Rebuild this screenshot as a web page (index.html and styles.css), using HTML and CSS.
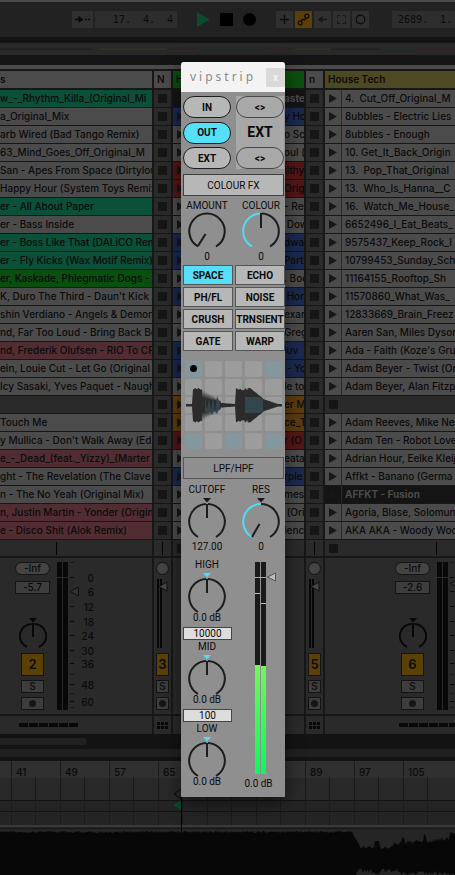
FILE: index.html
```
<!DOCTYPE html>
<html lang="en">
<head>
<meta charset="utf-8">
<meta name="viewport" content="width=device-width, initial-scale=1">
<title>vipstrip</title>
<link rel="stylesheet" href="styles.css">
</head>
<body>
<main class="app">
  <header class="toolbar">
    <button class="tool follow" aria-label="Follow"><svg width="17" height="9" viewBox="0 0 17 9"><path d="M1 4.500H7M11 4.500h2M14 4.500h2" stroke="#080808" stroke-width="1.500"/><path d="M4.500 1 9.500 4.500 4.500 8z" fill="#080808"/></svg></button>
    <div class="position"><span>17.</span><span>4.</span><span>4</span></div>
    <div class="transport">
      <button class="bare" aria-label="Play"><svg width="13" height="15" viewBox="0 0 13 15"><path d="M0 0 13 7.500 0 15z" fill="#0c4b2c"/></svg></button>
      <button class="bare" aria-label="Stop"><svg width="13" height="13"><path d="M0 0h13v13H0z"/></svg></button>
      <button class="bare" aria-label="Record"><svg width="13" height="13"><circle cx="6.500" cy="6.500" r="6.500"/></svg></button>
    </div>
    <div class="tools">
      <button class="tool" aria-label="Overdub"><svg width="11" height="11"><path d="M5.500 1v9M1 5.500h9" stroke="#080808" stroke-width="1.300"/></svg></button>
      <button class="tool lit" aria-label="Automation arm"><svg width="13" height="13" viewBox="0 0 13 13" fill="none" stroke="#0c0800" stroke-width="1.200"><circle cx="3.200" cy="9.800" r="2"/><circle cx="9.800" cy="3.200" r="2"/><path d="M4.200 8 5.500 6.200 7.500 7 8.700 5"/></svg></button>
      <button class="tool" aria-label="Re-enable automation"><svg width="11" height="9"><path d="M4 4.500h6" stroke="#161616" stroke-width="1.500"/><path d="M1 4.500 5.500 1v7z" fill="#161616"/></svg></button>
      <button class="tool" aria-label="Capture"><svg width="11" height="11" fill="none" stroke="#161616"><path d="M1.500 4V1.500H4M7 1.500h2.500V4M9.500 7v2.500H7M4 9.500H1.500V7"/></svg></button>
      <button class="tool" aria-label="Session record"><svg width="11" height="11" fill="none" stroke="#0c0c0c" stroke-width="1.200"><circle cx="5.500" cy="5.500" r="4.300"/></svg></button>
    </div>
    <div class="loop"><span>2689.</span><span>1.</span></div>
  </header>
  <div class="overview"><svg width="100%" height="2" viewBox="0 0 455 2" preserveAspectRatio="none"><path d="M0 1h93" stroke="#1c1c1c"/><path d="M101 1h66" stroke="#38381f"/><path d="M167 1h30" stroke="#30211f"/><path d="M200 1h60" stroke="#1b3520"/><path d="M260 1h35" stroke="#352020"/><path d="M295 1h36" stroke="#2a3a1c"/><path d="M331 1h50" stroke="#1c1c1c"/><path d="M385 1h32" stroke="#1c3520"/><path d="M417 1h38" stroke="#431d1d"/></svg></div>

  <section class="session">
    <div class="track" id="track-a"></div>
    <div class="track" id="track-b"></div>
    <div class="track" id="track-c"></div>
    <div class="track" id="track-d"></div>
    <div class="track" id="track-e"></div>
  </section>
  <div class="scroller"><div class="thumb"></div></div>
  <div class="splitter"></div>

  <section class="detail">
    <div class="ruler" id="ruler"></div>
    <svg class="markers" width="9" height="86" viewBox="0 0 9 86"><path d="M8 0 1 5 8 10" fill="none" stroke="#080808"/><path d="M8 11v10L0 16z" fill="#0b4b2e"/><path d="M8.500 0v86" stroke="#050505"/></svg>
    <div class="strip"></div>
    <svg class="wave" viewBox="0 0 455 46" preserveAspectRatio="none"><path id="wave" fill="#070707"/></svg>
  </section>
</main>

<aside class="panel">
  <header class="panel-title"><h1>vipstrip</h1><button class="close" aria-label="Close">x</button></header>
  <div class="routing">
    <div class="stack"><button class="pill">IN</button><button class="pill on">OUT</button><button class="pill">EXT</button></div>
    <div class="stack ext"><button class="pill">&lt;&gt;</button><strong>EXT</strong><button class="pill">&lt;&gt;</button></div>
  </div>
  <button class="wide">COLOUR FX</button>
  <div class="knobs">
    <div class="knob"><span>AMOUNT</span><svg width="38" height="38" viewBox="0 0 38 38"><path class="arc" d="M10 34.500A17.700 17.700 0 1 1 28 34.500"/><path class="needle" d="M10 34 17.500 22"/></svg><output>0</output></div>
    <div class="knob"><span>COLOUR</span><svg width="38" height="38" viewBox="0 0 38 38"><path class="arc" d="M20 1.500A17.700 17.700 0 0 1 28 34.500"/><path class="arc cyan" d="M10 34.500A17.700 17.700 0 0 1 18 1.500"/><path class="needle" d="M19 1v15"/></svg><output>0</output></div>
  </div>
  <div class="effects">
    <button class="on">SPACE</button><button>ECHO</button><button>PH/FL</button><button>NOISE</button><button>CRUSH</button><button>TRNSIENT</button><button>GATE</button><button>WARP</button>
  </div>
  <svg class="pads" viewBox="0 0 98 88"><g id="pads"></g><path id="scope" fill="#2b2b2b"/><g fill="#34464d"><path d="M20 36 22 49 24 37 26 50 28 36 30 51 32 35 35 43V46L32 53 29 49 27 54 25 50 22 53 20 50z"/><path d="M60 36h14l4 3v11l-4 2H60z"/></g><circle cx="8.500" cy="7.500" r="3.500"/></svg>
  <button class="wide hollow">LPF/HPF</button>
  <div class="knobs filter">
    <div class="knob"><span>CUTOFF</span><svg width="38" height="43" viewBox="0 0 38 43"><path d="M15 0h8l-4 4.500z" fill="#181818"/><path class="arc" d="M10 39A17.700 17.700 0 0 1 18 6M20 6A17.700 17.700 0 0 1 28 39"/><path class="needle" d="M19 6v14"/></svg><output>127.00</output></div>
    <div class="knob"><span>RES</span><svg width="38" height="43" viewBox="0 0 38 43"><path d="M15 0h8l-4 4.500z" fill="#181818"/><path class="arc" d="M19 6A17.700 17.700 0 0 1 28 39"/><path class="arc cyan" d="M10 39A17.700 17.700 0 0 1 19 6"/><path class="needle" d="M10 39 17.500 26"/></svg><output>0</output></div>
  </div>
  <div class="eq">
    <div class="bands">
      <div class="knob"><span>HIGH</span><svg width="38" height="42" viewBox="0 0 38 42"><path d="M15 0h8l-4 4.500z" fill="#51dcf5"/><path class="arc" d="M10 39A17.700 17.700 0 0 1 18 6M20 6A17.700 17.700 0 0 1 28 39"/><path class="needle" d="M19 6v14"/></svg><output>0.0 dB</output></div>
      <input aria-label="High crossover" value="10000">
      <div class="knob"><span>MID</span><svg width="38" height="42" viewBox="0 0 38 42"><path d="M15 0h8l-4 4.500z" fill="#51dcf5"/><path class="arc" d="M10 39A17.700 17.700 0 0 1 18 6M20 6A17.700 17.700 0 0 1 28 39"/><path class="needle" d="M19 6v14"/></svg><output>0.0 dB</output></div>
      <input aria-label="Low crossover" value="100">
      <div class="knob"><span>LOW</span><svg width="38" height="42" viewBox="0 0 38 42"><path d="M15 0h8l-4 4.500z" fill="#51dcf5"/><path class="arc" d="M10 39A17.700 17.700 0 0 1 18 6M20 6A17.700 17.700 0 0 1 28 39"/><path class="needle" d="M19 6v14"/></svg><output>0.0 dB</output></div>
    </div>
    <div class="level">
      <svg width="36" height="212" viewBox="0 0 36 212"><defs><linearGradient id="lv" x1="0" y1="0" x2="0" y2="1"><stop offset="0" stop-color="#78f45d"/><stop offset="1" stop-color="#0af85f"/></linearGradient></defs><path d="M12 0h5v212h-5zM18 0h5v212h-5z" fill="#1a1a1a"/><path d="M12 103h5v109h-5zM18 104h5v108h-5z" fill="url(#lv)"/><path d="M12 15.500h11" stroke="#aaa"/><path d="M12 31.500h5M18 41.500h5" stroke="#a7dc72"/><path d="M24.500 15 32.500 11v8z" fill="#bbb" stroke="#555"/></svg>
      <output>0.0 dB</output>
    </div>
  </div>
</aside>
<script src="app.js"></script>
</body>
</html>
```
FILE: styles.css
```
* { box-sizing: border-box; }
body {
  margin: 0;
  position: relative;
  background: #141414;
  color: #0b0b0b;
  font: 500 10px/17px Inter, "Liberation Sans", sans-serif;
  overflow: hidden;
}
button, input { font: inherit; color: inherit; padding: 0; margin: 0; border: 0; background: none; }
svg { display: block; flex: none; }
.app { display: flex; flex-direction: column; min-height: 100vh; }

/* Transport bar */
.toolbar {
  display: flex;
  align-items: center;
  height: 37px;
  padding-left: 72px;
  border-top: 2px solid #4a4a4a;
  background: #222;
  overflow: hidden;
}
.tool { display: flex; align-items: center; justify-content: center; width: 17px; height: 17px; background: #303030; }
.tool.lit { background: #5c3f07; }
.tool.follow { width: 21px; flex: none; }
.position, .loop { display: flex; gap: 12px; height: 17px; background: #2d2d2d; flex: none; font-family: "DejaVu Sans Mono", monospace; }
.position { width: 82px; margin-left: 2px; padding-right: 4px; justify-content: flex-end; }
.loop { flex: 1 0 0; margin-left: 23px; padding-left: 6px; overflow: hidden; }
.transport { display: flex; align-items: center; gap: 10px; margin-left: 20px; flex: none; }
.tools { display: flex; gap: 2px; margin-left: 20px; flex: none; }
.overview { display: flex; align-items: center; height: 12px; margin: 6px 0 10px; background: #292929; }

/* Session grid */
.session {
  display: grid;
  grid-template-columns: 152px 17px 131px 17px minmax(0, 1fr);
  column-gap: 2px;
  border-top: 4px solid #4a4a4a;
  padding-top: 2px;
  background: #171717;
}
.track { min-width: 0; overflow: hidden; }
.head { height: 17px; margin-bottom: 2px; padding-left: 3px; background: #4b4b4b; font-weight: 600; white-space: nowrap; overflow: hidden; }
.head.green { background: #0a500e; }
.head.yellow { background: #4d4a23; }
.head.first { padding-left: 0; }
.slot { display: flex; height: 17px; margin-bottom: 1px; background: #2a2a2a; white-space: nowrap; overflow: hidden; }
.slot.clip { background: #4b4b4b; }
.slot.teal { background: #0b5038; }
.slot.green { background: #09500e; }
.slot.pink { background: #512d33; }
.slot.blue { background: #1b294f; }
.slot.red { background: #531618; }
.slot.amber { background: #5c3b0e; }
.slot.playing { background: #141414; color: #4b4b4b; font-weight: 700; }
.launch { display: flex; align-items: center; width: 17px; height: 17px; padding-left: 4px; flex: none; }
.launch.edge { border-right: 1px solid #292929; }
.name { padding-left: 3px; }
.name.cut { padding-left: 0; }
.name.tail { margin-left: 94px; padding-left: 0; }
.status { display: flex; align-items: center; height: 16px; background: #2a2a2a; }
.tick { width: 1px; height: 13px; background: #050505; }
.tick.at-a { margin-left: 56px; }
.tick.at-b { margin-left: 8px; }
.tick.at-e { margin-left: 94px; }
.mixer { display: flex; gap: 7px; height: 156px; margin-top: 2px; padding-top: 4px; background: #2a2a2a; }
.mixer.a { padding-left: 15px; }
.mixer.e { padding-left: 70px; }
.mixer.thin { padding-left: 2px; }
.controls { display: flex; flex-direction: column; align-items: center; width: 35px; flex: none; }
.thin .controls { width: 13px; }
.readout { width: 35px; height: 13px; border: 1px solid #141414; background: #3d3d3d; line-height: 11px; text-align: center; }
.readout.peak { border-radius: 7px; margin-bottom: 6px; background: #444; }
.pan { margin: 24px 0 5px; }
.number, .solo, .arm { width: 23px; border: 1px solid #141414; background: #3d3d3d; }
.number { height: 23px; background: #5c4107; font-size: 13px; font-weight: 600; }
.solo { height: 13px; margin: 4px 0; line-height: 11px; }
.arm { display: flex; align-items: center; justify-content: center; height: 13px; }
.thin .number, .thin .solo, .thin .arm { width: 13px; }
.mini { margin: 0 0 5px; }
.scale text { font-size: 10px; text-anchor: end; fill: #0b0b0b; }
.io { display: flex; align-items: center; height: 18px; margin-top: 2px; background: #2a2a2a; }
.io.a { padding-left: 19px; }
.io.e { padding-left: 74px; }
.io.thin { padding-left: 3px; }

.scroller { height: 15px; padding-top: 4px; background: #131313; }
.thumb { width: 87px; height: 7px; border-radius: 0 4px 4px 0; background: #212121; }
.splitter { height: 12px; background: #202020; border-bottom: 4px solid #131313; }

/* Clip detail */
.detail { position: relative; display: flex; flex-direction: column; flex: 1; background: #242424; }
.ruler {
  display: flex;
  height: 64px;
  padding-left: 11px;
  overflow: hidden;
  background: linear-gradient(#303030 17px, #292929 17px, #292929 39px, #141414 39px, #141414 40px, #242424 40px, #242424 50px, #141414 50px, #141414 51px, #242424 51px);
}
.bar {
  flex: 0 0 49px;
  padding: 3px 0 0 4px;
  border-left: 1px solid #1b1b1b;
  background: linear-gradient(#1b1b1b, #1b1b1b) 23px 16px / 1px 48px no-repeat;
}
.markers { position: absolute; left: 173px; top: 28px; }
.strip { height: 4px; border-top: 2px solid #393939; border-bottom: 1px solid #171717; background: #242424; }
.wave { width: 100%; height: 46px; background: #252525; }

/* Floating channel strip */
.panel {
  position: absolute;
  left: 181px;
  top: 62px;
  width: 104px;
  padding-bottom: 7px;
  border-radius: 3px 3px 1px 1px;
  background: #8f8f8f;
  box-shadow: 0 6px 18px rgba(0, 0, 0, .5);
  font-family: Roboto, "Liberation Sans", sans-serif;
  font-weight: 400;
  line-height: 13px;
  overflow: hidden;
}
.panel-title { display: flex; align-items: center; justify-content: space-between; height: 30px; padding-left: 9px; background: #f3f3f3; }
.panel-title h1 { margin: 0; color: #8b8b8b; font: 400 12px/18px "Noto Sans", sans-serif; letter-spacing: 3px; }
.close { width: 19px; height: 19px; background: #d9d9d9; color: #f5f5f5; font-weight: 700; }
.routing { display: flex; gap: 5px; padding: 4px 2px 5px; }
.stack { display: flex; flex-direction: column; justify-content: space-between; width: 48px; height: 73px; }
.stack.ext { background: #a7a7a7; align-items: center; }
.stack strong { font-size: 14px; font-weight: 700; }
.pill { width: 48px; height: 22px; border: 1px solid #1d1d1d; border-radius: 11px; background: #b7b7b7; font-weight: 700; }
.ext .pill { border-color: #484848; background: #a9a9a9; }
.pill.on { background: #56dff8; }
.wide { display: block; width: 101px; height: 22px; margin-left: 2px; border: 1px solid #3f3f3f; background: #b7b7b7; }
.wide.hollow { background: none; border-color: #555; }
.knobs { display: flex; gap: 6px; padding: 3px 0 2px 2px; }
.knob { display: flex; flex-direction: column; align-items: center; width: 48px; }
.arc { fill: none; stroke: #1c1c1c; stroke-width: 2; }
.arc.cyan { stroke: #51dcf5; }
.needle { stroke: #1c1c1c; stroke-width: 2; fill: none; }
.effects { display: grid; grid-template-columns: 50px 50px; gap: 2px; padding: 0 0 10px 2px; }
.effects button { height: 20px; border: 1px solid #555; background: #b7b7b7; font-weight: 700; white-space: nowrap; }
.effects .on { background: #56dff8; }
.pads { width: 98px; height: 88px; margin: 0 0 8px 4px; }
.filter { padding: 4px 0 4px 2px; }
.filter svg { margin-top: 2px; }
.filter output { margin-top: -1px; }
.eq { display: flex; }
.bands { width: 51px; padding: 1px 0 0 2px; }
.bands svg { margin-top: 2px; }
.bands output { line-height: 10px; margin-top: -2px; }
.bands input { display: block; width: 49px; height: 13px; margin: 4px 0 0; border: 1px solid #444; background: #ddd; text-align: center; line-height: 11px; }
.level { display: flex; flex-direction: column; align-items: center; width: 53px; padding-top: 5px; }
.level svg { margin-left: 4px; }
.level output { margin-top: 3px; }
```
FILE: app.js
```
const tracks = {
  a: { head: ['s', 'first'], clips: [
    ['w_-_Rhythm_Killa_(Original_Mi', 'teal'], ['a_Original_Mix'], ['arb Wired (Bad Tango Remix)'],
    ['63_Mind_Goes_Off_Original_M'], ['San - Apes From Space (Dirtylou'], ['Happy Hour (System Toys Remix'],
    ['er - All About Paper', 'teal'], ['er - Bass Inside'], ['er - Boss Like That (DALiCO Rem', 'teal'],
    ['er - Fly Kicks (Wax Motif Remix)', 'teal'], ['er, Kaskade, Phlegmatic Dogs -', 'green'],
    ["K, Duro The Third - Daun't Kick M"], ['shin Verdiano - Angels & Demon'], ['nd, Far Too Loud - Bring Back Bo'],
    ['nd, Frederik Olufsen - RIO To CP', 'pink'], ['ein, Louie Cut - Let Go (Original'],
    ['Icy Sasaki, Yves Paquet - Naught'], null, ['Touch Me'], ["y Mullica - Don't Walk Away (Ed"],
    ['e_-_Dead_(feat._Yizzy)_(Marter', 'pink'], ['ght - The Revelation (The Clave R'], ['n - The No Yeah (Original Mix)'],
    ['n, Justin Martin - Yonder (Origin', 'pink'], ['e - Disco Shit (Alok Remix)', 'pink']] },
  c: { head: ['H', 'green'], clips: [
    ['aste', 'playing'], ['y Ho', 'blue'], ['o Sca'], ['oul ('], ['ilthy', 'red'], ['Origi', 'red'], ['- Rec'], [' Dow'],
    ['dwa', 'blue'], ['Party', 'blue'], ['. Boo'], [' Hor', 'blue'], ['exar'], ['Greg'], ['luv', 'blue'], [' - Yo', 'blue'],
    ['le to'], ['er M', 'amber'], ['ce_T', 'amber'], ['r (O', 'red'], ['eata'], ['rple', 'blue'], ['mes'], [' (Ori'], ['ienc']] },
  e: { head: ['House Tech', 'yellow'], clips: [
    ['4.  Cut_Off_Original_M'], ['8ubbles - Electric Lies'], ['8ubbles - Enough'], ['10. Get_It_Back_Origin'],
    ['13.  Pop_That_Original'], ['13.  Who_Is_Hanna__C'], ['16.  Watch_Me_House_'], ['6652496_I_Eat_Beats_'],
    ['9575437_Keep_Rock_I'], ['10799453_Sunday_Sch'], ['11164155_Rooftop_Sh'], ['11570860_What_Was_'],
    ['12833669_Brain_Freez'], ['Aaren San, Miles Dyson'], ["Ada - Faith (Koze's Gru"], ['Adam Beyer - Twist (Or'],
    ['Adam Beyer, Alan Fitzp'], null, ['Adam Reeves, Mike Nev'], ['Adam Ten - Robot Love'],
    ['Adrian Hour, Eelke Kleij'], ['Affkt - Banano (Germa'], ['AFFKT - Fusion', 'playing'],
    ['Agoria, Blase, Solomun'], ['AKA AKA - Woody Woo']] }
};
const square = '<svg width="9" height="9"><path d="M0 0h9v9H0z" fill="#161616"/></svg>';
const triangle = '<svg width="8" height="9"><path d="M0 0 8 4.500 0 9z" fill="#171717"/></svg>';
const stopButton = `<button class="launch" aria-label="Stop clip">${square}</button>`;
const playButton = '<button class="launch edge" aria-label="Launch clip">' + triangle + '</button>';
const escapeText = s => s.replace(/&/g, '&amp;').replace(/ {2}/g, ' &nbsp;').replace(/^ /, '&nbsp;');

function slot(id, clip) {
  if (!clip) return `<div class="slot">${id === 'a' ? '' : stopButton}</div>`;
  const kind = { a: 'cut', c: 'tail', e: '' }[id];
  return `<div class="slot clip ${clip[1] || ''}">${id === 'a' ? '' : playButton}<span class="name ${kind}">${escapeText(clip[0])}</span></div>`;
}

const arm = '<button class="arm" aria-label="Arm"><svg width="7" height="7"><circle cx="3.500" cy="3.500" r="3.500" fill="#161616"/></svg></button>';

function wideMixer(id, number, level, fader) {
  const marks = [[0, 16], [6, 30], [12, 45], [18, 60], [24, 74], [30, 89], [36, 102], [48, 123], [60, 140]];
  const scale = marks.map(([n, y]) => `<path d="M13 ${y - .5}h4" stroke="#080808"/>` +
    (id === 'a' ? `<text x="37" y="${y + 4}">${n}</text>` : '')).join('');
  return `<div class="mixer ${id}"><div class="controls">
    <output class="readout peak">-Inf</output><output class="readout">${level}</output>
    <svg class="pan" width="28" height="30" viewBox="0 0 28 30"><path d="M10 0h8l-4 4.500z" fill="#080808"/><path d="M8 29A12 12 0 0 1 12.500 6M15.500 6A12 12 0 0 1 20 29M14 5v14" fill="none" stroke="#080808" stroke-width="2"/></svg>
    <button class="number">${number}</button><button class="solo">S</button>${arm}</div>
    <svg class="scale" width="42" height="148"><path d="M0 0h5v148H0zM6 0h5v148H6z" fill="#080808"/><path d="M0 15.500h11" stroke="#2b2b2b"/>
    <path d="M13 .5h4M13 112.500h4M13 131.500h4M13 145.500h4" stroke="#181818"/>${scale}<path d="M13 ${fader} l8.500 -4.500v9z" fill="#303030" stroke="#111"/></svg></div>`;
}

function thinMixer(number) {
  return `<div class="mixer thin"><div class="controls"><svg class="mini" width="13" height="86" viewBox="0 0 13 86">
    <circle cx="6.500" cy="6.500" r="6" fill="#444" stroke="#141414"/><path d="M1 17h2v69H1zM4 17h2v69H4z" fill="#080808"/>
    <path d="M3 24.500 11 20v9z" fill="#444" stroke="#111"/></svg>
    <button class="number">${number}</button><button class="solo">S</button>${arm}</div></div>`;
}

const dashes = '<svg width="59" height="4"><path d="M0 0h9v4H0zM10 0h9v4h-9zM20 0h9v4h-9zM30 0h9v4h-9zM40 0h9v4h-9zM50 0h9v4h-9z" fill="#080808"/></svg>';
const dots = '<svg width="11" height="7"><path d="M0 0h3v3H0zM4 0h3v3H4zM8 0h3v3H8zM0 4h3v3H0zM4 4h3v3H4zM8 4h3v3H8z" fill="#080808"/></svg>';

for (const [id, track] of Object.entries(tracks)) {
  let html = `<div class="head ${track.head[1]}">${track.head[0]}</div>` + track.clips.map(c => slot(id, c)).join('');
  html += `<div class="status">${id === 'a' ? '' : stopButton}${id === 'c' ? '' : `<i class="tick at-${id}"></i>`}</div>`;
  if (id === 'a') html += wideMixer('a', 2, '-5.7', 29.500);
  if (id === 'c') html += '<div class="mixer"></div>';
  if (id === 'e') html += wideMixer('e', 6, '-2.6', 21.500);
  html += `<div class="io ${id}">${id === 'c' ? '' : dashes}</div>`;
  document.getElementById('track-' + id).innerHTML = html;
}
for (const [id, name, number] of [['b', 'N', 3], ['d', 'n', 5]]) {
  document.getElementById('track-' + id).innerHTML = `<div class="head">${name}</div>` +
    `<div class="slot">${stopButton}</div>`.repeat(25) +
    `<div class="status"><i class="tick at-b"></i></div>` + thinMixer(number) + `<div class="io thin">${dots}</div>`;
}

document.getElementById('ruler').innerHTML = [41, 49, 57, 65, 73, 81, 89, 97, 105]
  .map(n => `<div class="bar">${n}</div>`).join('');

/* Clip waveform: full level up to the break, then a quieter section */
const noise = i => Math.abs(Math.sin(i * 12.9898) * 43758.5453) % 1;
const upper = [], lower = [];
for (let x = 0; x <= 455; x++) {
  let y = 2 + noise(x) * 2, low = 46;
  if (x > 352) {
    y = x < 360 ? 4 + (x - 352) * 1.6 : x < 393 ? 17 + noise(x) * 3 : 17 - (x - 393) * .1 - noise(x) * 4;
    if (x > 374 && x < 380) y = 12;
    if ((x > 401 && x < 405) || (x > 423 && x < 427) || x > 449) y -= 5;
    low = x < 357 ? 46 : x > 374 && x < 380 ? 45 : 39 + noise(x + 9) * 5 + (x > 400 ? 3 : 0);
  }
  upper.push(`${x} ${y.toFixed(1)}`);
  lower.unshift(`${x} ${Math.min(low, 46).toFixed(1)}`);
}
document.getElementById('wave').setAttribute('d', 'M' + upper.concat(lower).join('L') + 'z');

/* Pad matrix behind the scope */
const lit = [0, 4, 20, 22, 24];
let pads = '';
for (let i = 0; i < 25; i++) {
  pads += `<rect x="${(i % 5) * 20}" y="${Math.floor(i / 5) * 18}" width="17" height="16" rx="2" fill="${lit.includes(i) ? '#83979f' : '#9c9c9c'}"/>`;
}
document.getElementById('pads').innerHTML = pads;

const level = x => x < 8 ? 1 : x < 17 ? 17 - noise(x) * 2 : x < 36 ? (x % 2 ? 14 : 5) * (40 - x) / 23 + 2
  : x < 51 ? 2 - (x - 36) / 15 : x < 65 ? 17 - noise(x) * 3 : x < 78 ? 17 - (x - 65) * .8 : Math.max(1, 6 - (x - 78) / 3);
const up = [], down = [];
for (let x = 1; x <= 97; x++) {
  up.push(`${x} ${(44 - level(x)).toFixed(1)}`);
  down.unshift(`${x} ${(44.500 + level(x)).toFixed(1)}`);
}
document.getElementById('scope').setAttribute('d', 'M' + up.concat(down).join('L') + 'z');
```
